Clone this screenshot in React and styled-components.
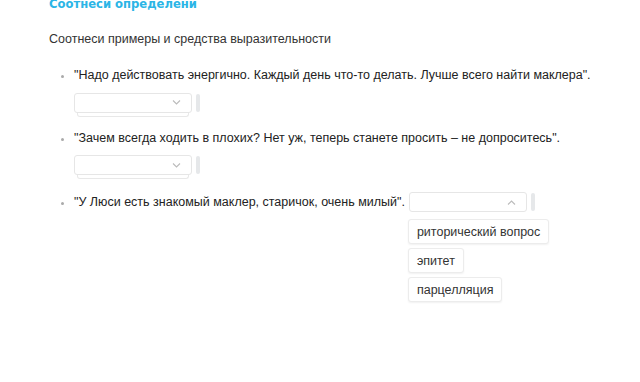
import styled, { createGlobalStyle } from "styled-components";

const GlobalStyle = createGlobalStyle`
  body {
    margin: 0;
    background: #fff;
    font-family: "Liberation Sans", Arial, sans-serif;
    color: #333;
  }
`;

const items = [
  {
    text: '"Надо действовать энергично. Каждый день что-то делать. Лучше всего найти маклера".',
    inline: false,
  },
  {
    text: '"Зачем всегда ходить в плохих? Нет уж, теперь станете просить – не допроситесь".',
    inline: false,
  },
  {
    text: '"У Люси есть знакомый маклер, старичок, очень милый".',
    inline: true,
    open: true,
  },
];

const choices = ["риторический вопрос", "эпитет", "парцелляция"];

function Chevron({ up }) {
  return (
    <svg width="9" height="5" viewBox="0 0 9 5">
      <path
        d={up ? "M1 4.5 L4.5 1 L8 4.5" : "M1 0.5 L4.5 4 L8 0.5"}
        fill="none"
        stroke="#bbb"
        strokeWidth="1.1"
      />
    </svg>
  );
}

function Dropdown({ open }) {
  return (
    <SelectWrap>
      <SelectStack $open={open}>
        <SelectBox>
          <Chevron up={open} />
        </SelectBox>
        {!open && <StackLine />}
        {open ? (
          <ChoiceList>
            {choices.map((o) => (
              <Choice key={o}>{o}</Choice>
            ))}
          </ChoiceList>
        ) : null}
      </SelectStack>
      <Handle />
    </SelectWrap>
  );
}

function App() {
  return (
    <>
      <GlobalStyle />
      <Page>
        <Title>Соотнеси определени</Title>
        <Subtitle>Соотнеси примеры и средства выразительности</Subtitle>
        <List>
          {items.map((it, i) => (
            <Item key={i}>
              {it.inline ? (
                <InlineRow>
                  <span>{it.text}</span>
                  <Dropdown open={!!it.open} />
                </InlineRow>
              ) : (
                <>
                  <div>{it.text}</div>
                  <Below>
                    <Dropdown open={false} />
                  </Below>
                </>
              )}
            </Item>
          ))}
        </List>
      </Page>
    </>
  );
}

export default App;

const Page = styled.div`
  box-sizing: border-box;
  min-height: 100vh;
  padding-left: 49px;
  margin-top: -4px;
`;

const Title = styled.h2`
  margin: 0;
  font-family: "DejaVu Sans", sans-serif;
  font-weight: bold;
  font-size: 11.6px;
  line-height: 16px;
  color: #2bb5e6;
`;

const Subtitle = styled.p`
  margin: 18px 0 0;
  font-size: 12.5px;
  line-height: 18px;
  color: #333;
`;

const List = styled.ul`
  margin: 18px 0 0;
  padding: 0 0 0 25px;
  display: flex;
  flex-direction: column;
  gap: 12px;
`;

const Item = styled.li`
  font-size: 12.5px;
  line-height: 18px;
  color: #222;
  &::marker {
    color: #aaa;
    font-size: 11px;
  }
`;

const Below = styled.div`
  margin-top: 8px;
`;

const InlineRow = styled.div`
  display: flex;
  align-items: center;
  gap: 4px;
  margin-top: 1px;
`;

const SelectWrap = styled.div`
  display: inline-flex;
  align-items: flex-start;
  gap: 4px;
`;

const SelectStack = styled.div`
  position: relative;
  width: 118px;
  padding-bottom: ${(p) => (p.$open ? "0" : "4px")};
`;

const SelectBox = styled.div`
  position: relative;
  z-index: 1;
  box-sizing: border-box;
  height: 20px;
  background: #fff;
  border: 1px solid #e6e6e6;
  border-radius: 3px;
  display: flex;
  align-items: center;
  justify-content: flex-end;
  padding-right: 10px;
`;

const StackLine = styled.div`
  position: absolute;
  left: 3px;
  right: 3px;
  bottom: 0;
  height: 8px;
  border: 1px solid #e8e8e8;
  border-top: none;
  border-radius: 0 0 3px 3px;
`;

const Handle = styled.div`
  width: 4px;
  height: 18px;
  margin-top: 1px;
  border-radius: 2px;
  background: #e6e8ea;
`;

const ChoiceList = styled.div`
  position: absolute;
  z-index: 5;
  top: 27px;
  left: -1px;
  display: flex;
  flex-direction: column;
  align-items: flex-start;
  gap: 4px;
`;

const Choice = styled.div`
  box-sizing: border-box;
  height: 25px;
  padding: 0 8px;
  display: flex;
  align-items: center;
  white-space: nowrap;
  background: #fff;
  border: 1px solid #ececec;
  border-radius: 3px;
  box-shadow: 0 1px 2px rgba(0, 0, 0, 0.06);
  font-size: 12.5px;
  color: #333;
`;
